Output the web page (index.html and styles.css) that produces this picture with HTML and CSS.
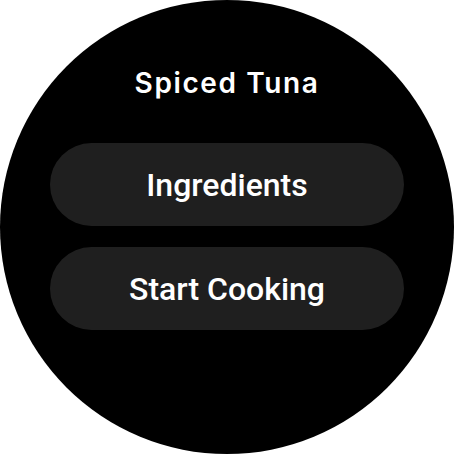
FILE: index.html
```html
<!DOCTYPE html>
<html>
<head>
<meta charset="utf-8">
<link rel="stylesheet" href="styles.css">
</head>
<body>
<div class="watch">
  <div class="title">Spiced Tuna</div>
  <div class="chip">Ingredients</div>
  <div class="chip">Start Cooking</div>
</div>
</body>
</html>
```
FILE: styles.css
```css
html, body {
  margin: 0;
  padding: 0;
  background: #ffffff;
}
.watch {
  width: 454px;
  height: 454px;
  border-radius: 50%;
  background: #000000;
  display: flex;
  flex-direction: column;
  align-items: center;
  box-sizing: border-box;
  padding-top: 65px;
}
.title {
  color: #ffffff;
  font-family: "Inter", "Lato", sans-serif;
  font-weight: 600;
  font-size: 28px;
  letter-spacing: 1.6px;
  line-height: 36px;
  margin-bottom: 42px;
}
.chip {
  width: 354px;
  height: 83px;
  border-radius: 42px;
  background: #1f1f1f;
  color: #ffffff;
  font-family: "Roboto", sans-serif;
  font-weight: 500;
  font-size: 32px;
  display: flex;
  align-items: center;
  justify-content: center;
  margin-bottom: 21px;
}
```
